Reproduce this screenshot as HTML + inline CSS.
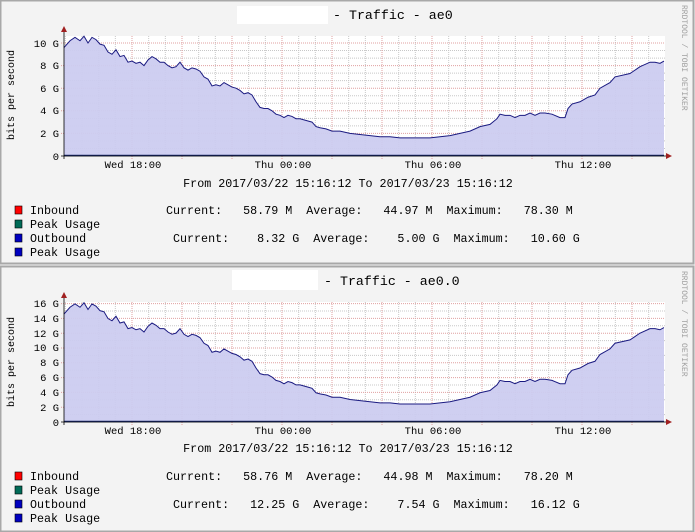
<!DOCTYPE html>
<html><head><meta charset="utf-8"><style>
html,body{margin:0;padding:0;background:#f3f3f3;}
svg{display:block;}
text{font-family:"Liberation Mono","DejaVu Sans Mono",monospace;fill:#000;white-space:pre;}
</style></head><body>
<svg id="s" width="695" height="532" xmlns="http://www.w3.org/2000/svg">
<rect x="0" y="0" width="695" height="532" fill="#f3f3f3"/>
<rect x="0.5" y="0.5" width="693" height="263" fill="none" stroke="#a8a8a8" stroke-width="2"/>
<rect x="0.5" y="266.5" width="693" height="265" fill="none" stroke="#a8a8a8" stroke-width="2"/>
<g id="g1"></g><g id="g2"></g>
<rect x="237" y="6" width="91" height="18" fill="#fff"/>
<text x="333" y="19" font-size="13.3">- Traffic - ae0</text>
<text transform="translate(14,95) rotate(-90)" font-size="10" text-anchor="middle">bits per second</text>
<text transform="translate(682,5) rotate(90)" font-size="8" style="fill:#a0a0a0">RRDTOOL / TOBI OETIKER</text>
<g font-size="10.5" text-anchor="end">
<text x="59" y="47">10 G</text><text x="59" y="69">8 G</text><text x="59" y="92">6 G</text><text x="59" y="114">4 G</text><text x="59" y="137">2 G</text><text x="59" y="160">0</text>
</g>
<g font-size="10.5" text-anchor="middle">
<text x="133" y="168">Wed 18:00</text><text x="283" y="168">Thu 00:00</text><text x="433" y="168">Thu 06:00</text><text x="583" y="168">Thu 12:00</text>
</g>
<text x="348" y="187" font-size="11.7" text-anchor="middle">From 2017/03/22 15:16:12 To 2017/03/23 15:16:12</text>
<g font-size="11.7">
<rect x="15" y="206" width="7" height="8" fill="#f00" stroke="#000" stroke-width="0.6"/>
<rect x="15" y="220" width="7" height="8" fill="#006b57" stroke="#000" stroke-width="0.6"/>
<rect x="15" y="234" width="7" height="8" fill="#0000c0" stroke="#000" stroke-width="0.6"/>
<rect x="15" y="248" width="7" height="8" fill="#0000c0" stroke="#000" stroke-width="0.6"/>
<text x="30" y="214">Inbound</text>
<text x="166" y="214">Current:   58.79 M  Average:   44.97 M  Maximum:   78.30 M</text>
<text x="30" y="228">Peak Usage</text>
<text x="30" y="242">Outbound</text>
<text x="173" y="242">Current:    8.32 G  Average:    5.00 G  Maximum:   10.60 G</text>
<text x="30" y="256">Peak Usage</text>
</g>
<rect x="232" y="270" width="86" height="20" fill="#fff"/>
<text x="324" y="285" font-size="13.3">- Traffic - ae0.0</text>
<text transform="translate(14,362) rotate(-90)" font-size="10" text-anchor="middle">bits per second</text>
<text transform="translate(682,271) rotate(90)" font-size="8" style="fill:#a0a0a0">RRDTOOL / TOBI OETIKER</text>
<g font-size="10.5" text-anchor="end">
<text x="59" y="307">16 G</text><text x="59" y="322">14 G</text><text x="59" y="337">12 G</text><text x="59" y="351">10 G</text><text x="59" y="366">8 G</text><text x="59" y="381">6 G</text><text x="59" y="396">4 G</text><text x="59" y="411">2 G</text><text x="59" y="426">0</text>
</g>
<g font-size="10.5" text-anchor="middle">
<text x="133" y="434">Wed 18:00</text><text x="283" y="434">Thu 00:00</text><text x="433" y="434">Thu 06:00</text><text x="583" y="434">Thu 12:00</text>
</g>
<text x="348" y="452" font-size="11.7" text-anchor="middle">From 2017/03/22 15:16:12 To 2017/03/23 15:16:12</text>
<g font-size="11.7">
<rect x="15" y="472" width="7" height="8" fill="#f00" stroke="#000" stroke-width="0.6"/>
<rect x="15" y="486" width="7" height="8" fill="#006b57" stroke="#000" stroke-width="0.6"/>
<rect x="15" y="500" width="7" height="8" fill="#0000c0" stroke="#000" stroke-width="0.6"/>
<rect x="15" y="514" width="7" height="8" fill="#0000c0" stroke="#000" stroke-width="0.6"/>
<text x="30" y="480">Inbound</text>
<text x="166" y="480">Current:   58.76 M  Average:   44.98 M  Maximum:   78.20 M</text>
<text x="30" y="494">Peak Usage</text>
<text x="30" y="508">Outbound</text>
<text x="173" y="508">Current:   12.25 G  Average:    7.54 G  Maximum:   16.12 G</text>
<text x="30" y="522">Peak Usage</text>
</g>
</svg>
<script>
var d=[[64,9.6],[70,10.2],[75,10.5],[80,10.2],[84,10.6],[88,10.0],[92,10.5],[96,10.3],[100,9.9],[104,9.8],[108,9.2],[112,9.0],[116,9.4],[120,8.8],[124,8.9],[128,8.3],[132,8.4],[136,8.2],[140,8.3],[144,8.0],[148,8.5],[152,8.8],[156,8.6],[160,8.3],[164,8.3],[168,8.0],[172,7.8],[176,7.9],[180,8.3],[184,7.8],[188,7.6],[192,7.8],[196,7.7],[200,7.5],[204,7.0],[208,6.8],[212,6.2],[216,6.3],[220,6.2],[224,6.5],[228,6.3],[232,6.1],[236,6.0],[240,5.8],[244,5.5],[248,5.6],[252,5.4],[256,4.8],[260,4.3],[264,4.2],[268,4.2],[272,4.0],[276,3.7],[280,3.6],[284,3.4],[288,3.6],[292,3.5],[296,3.3],[300,3.3],[304,3.2],[308,3.1],[312,3.0],[316,2.6],[320,2.5],[326,2.4],[332,2.2],[340,2.2],[350,2.0],[360,1.9],[370,1.8],[380,1.7],[390,1.7],[400,1.6],[410,1.6],[420,1.6],[430,1.6],[440,1.7],[450,1.8],[460,2.0],[470,2.2],[480,2.6],[490,2.8],[497,3.3],[500,3.7],[505,3.6],[510,3.6],[515,3.4],[520,3.6],[525,3.6],[530,3.8],[535,3.6],[540,3.8],[545,3.8],[552,3.7],[560,3.4],[565,3.4],[568,4.2],[572,4.6],[580,4.8],[588,5.2],[595,5.4],[600,6.0],[610,6.5],[615,7.0],[630,7.3],[640,7.9],[650,8.3],[655,8.3],[660,8.2],[664,8.4]];
function build(id,y0,top,step,nmaj,sub,scale){
 var h='';var g=document.getElementById(id);
 h+='<rect x="64" y="'+top+'" width="601" height="'+(y0-top)+'" fill="#fff"/>';
 for(var i=0;i<=nmaj*sub+1;i++){var y=y0-i*step/sub;if(y<top)break;if(i%sub)h+='<line x1="64" x2="665" y1="'+y+'" y2="'+y+'" stroke="#c8c8c8" stroke-width="1" stroke-dasharray="1,1"/>';}
 for(var x=64+68-4*16.667;x<665;x+=16.667){if(x<64)continue;h+='<line x1="'+x+'" x2="'+x+'" y1="'+top+'" y2="'+y0+'" stroke="#c8c8c8" stroke-dasharray="1,1"/>';}
 for(var x=132;x<665;x+=50)h+='<line x1="'+x+'" x2="'+x+'" y1="'+top+'" y2="'+(y0+3)+'" stroke="#e0a0a0" stroke-dasharray="1,1"/>';
 for(var i=1;i<=nmaj;i++){var y=y0-i*step;h+='<line x1="61" x2="665" y1="'+y+'" y2="'+y+'" stroke="#e0a0a0" stroke-dasharray="1,1"/>';}
 var p='';d.forEach(function(q){p+=q[0]+','+(y0-q[1]*scale)+' ';});
 h+='<polygon points="64,'+y0+' '+p+'664,'+y0+'" fill="#ccccf0" fill-opacity="0.95"/>';
 h+='<polyline points="'+p+'" fill="none" stroke="#1a1a80" stroke-width="1"/>';
 h+='<line x1="64" x2="664" y1="'+(y0-0.5)+'" y2="'+(y0-0.5)+'" stroke="#1a2a70" stroke-width="1.5"/>';
 h+='<line x1="61" x2="668" y1="'+y0+'" y2="'+y0+'" stroke="#000" stroke-width="0.8"/>';
 h+='<line x1="64" x2="64" y1="'+(top-6)+'" y2="'+(y0+3)+'" stroke="#000" stroke-width="0.8"/>';
 h+='<polygon points="61,'+(top-4)+' 67,'+(top-4)+' 64,'+(top-10)+'" fill="#a02020"/>';
 h+='<polygon points="666,'+(y0-3)+' 666,'+(y0+3)+' 672,'+y0+'" fill="#a02020"/>';
 g.innerHTML=h;
}
build('g1',156,36,22.6,5,3,11.3);
build('g2',422,302,14.8,8,2,7.4*1.52);
</script>
</body></html>
